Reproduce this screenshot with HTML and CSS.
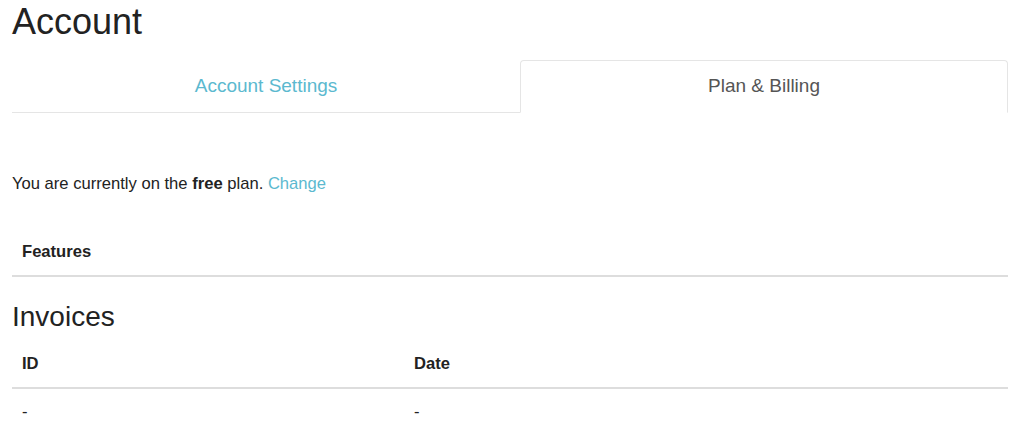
FILE: index.html
```html
<!DOCTYPE html>
<html>
<head>
<meta charset="utf-8">
<link rel="stylesheet" href="styles.css">
</head>
<body>
<div class="container">
  <h1 class="title">Account</h1>
  <ul class="tabs">
    <li class="tab tab-wide"><a href="#">Account Settings</a></li>
    <li class="tab active"><a href="#">Plan &amp; Billing</a></li>
  </ul>
  <p class="plan">You are currently on the <strong>free</strong> plan. <a href="#">Change</a></p>
  <table class="table">
    <thead><tr><th>Features</th></tr></thead>
  </table>
  <h2 class="subtitle">Invoices</h2>
  <table class="table">
    <thead><tr><th class="col-id">ID</th><th>Date</th></tr></thead>
    <tbody><tr><td>-</td><td>-</td></tr></tbody>
  </table>
</div>
</body>
</html>
```
FILE: styles.css
```css
html, body { margin: 0; padding: 0; background: #fff; }
body {
  font-family: "Liberation Sans", Arial, sans-serif;
  font-size: 16.6px;
  line-height: 1.42857;
  color: #222;
}
.container { padding: 0 16px 0 12px; }
.title {
  margin: 0;
  padding-top: 2px;
  font-size: 36px;
  font-weight: 400;
  line-height: 40px;
  height: 58px;
}
.tabs {
  list-style: none;
  margin: 0;
  padding: 0;
  display: flex;
  border-bottom: 1px solid #e5e5e5;
}
.tab { flex: 488 1 0; margin-bottom: -1px; }
.tab-wide { flex-grow: 508; }
.tab a {
  display: block;
  text-align: center;
  text-decoration: none;
  color: #5bb9cf;
  font-size: 19px;
  line-height: 24px;
  padding: 13px 15px 14px;
  border: 1px solid transparent;
  border-radius: 4px 4px 0 0;
}
.tab.active a {
  color: #555;
  border-color: #e5e5e5;
  border-bottom-color: #fff;
  background: #fff;
}
.plan { margin: 59px 0 0; line-height: 24px; }
.plan a { color: #5bb9cf; text-decoration: none; }
.table { width: 100%; border-collapse: collapse; margin-top: 33px; }
.table th {
  text-align: left;
  font-weight: 700;
  padding: 10px;
  line-height: 26px;
  border-bottom: 2px solid #ddd;
}
.table td { padding: 13px 10px 8px; line-height: 20px; }
.col-id { width: 372px; }
.subtitle {
  margin: 24px 0 0;
  font-size: 28px;
  font-weight: 400;
  line-height: 32px;
}
.subtitle + .table { margin-top: 8px; }
```
